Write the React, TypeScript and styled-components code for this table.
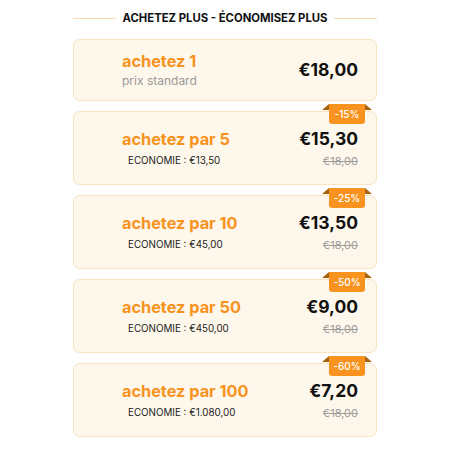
import React from 'react'
import styled, { createGlobalStyle } from 'styled-components'

const GlobalStyle = createGlobalStyle`
  body {
    margin: 0;
    background: #FFFFFF;
    font-family: 'Inter', 'Liberation Sans', sans-serif;
  }
`

const Page = styled.div`
  width: 304px;
  margin: 0 auto;
  padding-top: 10px;
  display: flex;
  flex-direction: column;
`

const Heading = styled.div`
  display: flex;
  align-items: center;
  gap: 7px;
  height: 16px;
  margin-bottom: 13px;
  font-size: 11.3px;
  font-weight: 700;
  color: #111111;
  white-space: nowrap;

  &::before, &::after {
    content: '';
    flex: 1;
    height: 1px;
    background: #FAD9AE;
  }
`

const List = styled.div`
  display: flex;
  flex-direction: column;
  gap: 10px;
`

const Card = styled.div<{ $short?: boolean }>`
  position: relative;
  box-sizing: border-box;
  height: ${p => (p.$short ? '62px' : '74px')};
  background: #FEF7EB;
  border: 1px solid #FBE2C0;
  border-radius: 7px;
  padding: 0 18px 0 48px;
  display: flex;
  align-items: center;
  justify-content: space-between;
`

const Left = styled.div`
  display: flex;
  flex-direction: column;
`

const Name = styled.div`
  font-size: 16.3px;
  font-weight: 700;
  color: #F7931E;
  line-height: 20px;
`

const Standard = styled.div`
  font-size: 12px;
  color: #9A9A9A;
  line-height: 16px;
  margin-top: 2px;
`

const Saving = styled.div`
  font-size: 9.8px;
  color: #222222;
  line-height: 14px;
  margin-top: 5px;
  padding-left: 6px;
`

const Right = styled.div`
  display: flex;
  flex-direction: column;
  align-items: flex-end;
`

const Price = styled.div`
  font-size: 17.5px;
  font-weight: 700;
  color: #111111;
  line-height: 22px;
`

const OldPrice = styled.div`
  font-size: 11px;
  color: #9C9C9C;
  text-decoration: line-through;
  line-height: 16px;
  margin-top: 3px;
`

const Badge = styled.div`
  position: absolute;
  top: -8px;
  right: 11px;
  width: 36px;
  height: 20px;
  background: #F7931E;
  border-radius: 0 0 3px 3px;
  color: #FFFFFF;
  font-size: 10px;
  font-weight: 500;
  display: flex;
  align-items: center;
  justify-content: center;

  &::before, &::after {
    content: '';
    position: absolute;
    top: 0;
    width: 0;
    height: 0;
    border-bottom: 6px solid #A8620F;
  }
  &::before {
    left: -7px;
    border-left: 7px solid transparent;
  }
  &::after {
    right: -7px;
    border-right: 7px solid transparent;
  }
`

const tiers = [
  { qty: 5, price: '€15,30', saving: '€13,50', off: '-15%' },
  { qty: 10, price: '€13,50', saving: '€45,00', off: '-25%' },
  { qty: 50, price: '€9,00', saving: '€450,00', off: '-50%' },
  { qty: 100, price: '€7,20', saving: '€1.080,00', off: '-60%' },
]

const App: React.FC = () => {
  return (
    <>
      <GlobalStyle />
      <Page>
        <Heading>ACHETEZ PLUS - ÉCONOMISEZ PLUS</Heading>
        <List>
          <Card $short>
            <Left>
              <Name>achetez 1</Name>
              <Standard>prix standard</Standard>
            </Left>
            <Right>
              <Price>€18,00</Price>
            </Right>
          </Card>
          {tiers.map(t => (
            <Card key={t.qty}>
              <Badge>{t.off}</Badge>
              <Left>
                <Name>achetez par {t.qty}</Name>
                <Saving>ECONOMIE : {t.saving}</Saving>
              </Left>
              <Right>
                <Price>{t.price}</Price>
                <OldPrice>€18,00</OldPrice>
              </Right>
            </Card>
          ))}
        </List>
      </Page>
    </>
  )
}

export default App
